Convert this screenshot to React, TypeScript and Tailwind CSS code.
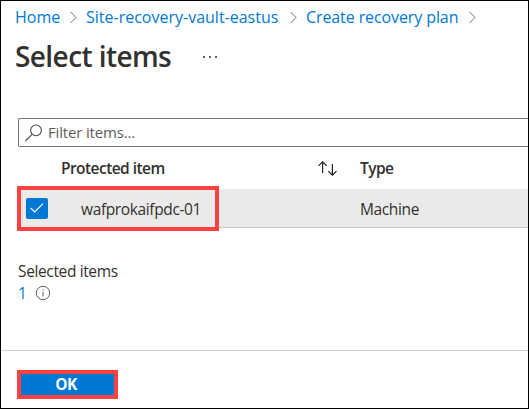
function Chevron() {
  return (
    <svg className="h-[13px] w-[7px] shrink-0" viewBox="0 0 7 13" fill="none" stroke="#6f6f6f" strokeWidth="1">
      <path d="M.6 1l5.4 5.5L.6 12" />
    </svg>
  );
}

function SearchIcon() {
  return (
    <svg className="ml-[6px] h-[18px] w-[18px] shrink-0" viewBox="0 0 18 18" fill="none" stroke="#4a4a4a" strokeWidth="1.1">
      <circle cx="11" cy="6.4" r="5.4" />
      <path d="M7.1 10.3L.4 17" />
    </svg>
  );
}

export default function App() {
  return (
    <main className="flex h-[409px] w-[529px] flex-col overflow-hidden border border-black bg-white font-['Open_Sans','Noto_Sans',sans-serif] text-[15.5px] tracking-[-0.37px] text-[#323130]">
      <nav className="flex h-8 shrink-0 items-center pl-[14px] text-base leading-8 tracking-normal whitespace-nowrap text-[#0078d4]">
        <a className="w-[55px]">Home</a>
        <Chevron />
        <a className="ml-[9px] w-[204px]">Site-recovery-vault-eastus</a>
        <Chevron />
        <a className="ml-[9px] w-[163px] tracking-[-0.1px]">Create recovery plan</a>
        <Chevron />
      </nav>

      <header className="flex h-[46px] shrink-0 items-center pl-[14px]">
        <h1 className="w-[188px] text-[28px] leading-[46px] font-semibold tracking-[-0.58px] whitespace-nowrap">Select items</h1>
        <div className="mt-[2px] flex gap-[4px]">
          <i className="size-[2px] bg-[#666]" />
          <i className="size-[2px] bg-[#666]" />
          <i className="size-[2px] bg-[#666]" />
        </div>
      </header>

      <div className="mt-[39px] ml-[17px] flex h-[29px] shrink-0 items-center rounded-l-[2px] border border-r-0 border-[#767676] text-[#605e5c]">
        <SearchIcon />
        <span className="ml-[5px] text-[15px] leading-[27px] tracking-[-0.16px]">Filter items...</span>
      </div>

      <div className="flex h-[42px] shrink-0 items-center pl-[60px] leading-[42px] font-semibold tracking-[-0.55px]">
        <span className="w-[257px]">Protected item</span>
        <svg className="h-[15px] w-[19px]" viewBox="0 0 19 15" fill="none" stroke="#252423" strokeWidth="1.2">
          <path d="M4.6 12V.8M.5 4.9L4.6.8l4.1 4.1M14.4 3v11.2M10.3 10.1l4.1 4.1 4.1-4.1" />
        </svg>
        <span className="ml-[23px]">Type</span>
      </div>

      <div className="ml-[17px] flex h-[39px] shrink-0 items-center border-b border-[#c8c6c4] bg-[#ebeae9]">
        <div className="-ml-px flex h-[45px] w-[202px] shrink-0 items-center border-4 border-[#ff4141] pl-[5px]">
          <span className="flex h-[21px] w-[22px] items-center justify-center rounded-[2px] bg-[#0078d4]">
            <svg className="h-[10px] w-[14px]" viewBox="0 0 14 10" fill="none" stroke="white" strokeWidth="1.1">
              <path d="M.7 5l4 4L13 .7" />
            </svg>
          </span>
          <span className="ml-[33px] pt-[2px] leading-[35px]">wafprokaifpdc-01</span>
        </div>
        <span className="ml-[141px] pt-[2px] leading-[36px]">Machine</span>
      </div>

      <section className="mt-[31px] h-[91px] shrink-0 pl-[17px]">
        <div className="h-[23px] leading-[25px]">Selected items</div>
        <div className="flex h-[21px] items-center">
          <a className="w-[17px] pt-[2px] leading-[19px] text-[#0078d4]">1</a>
          <svg className="h-[16px] w-[16px]" viewBox="0 0 16 16" fill="none" stroke="#605e5c">
            <circle cx="8" cy="8" r="6.7" />
            <path d="M8 7v4.5M8 4.5v1.2" />
          </svg>
        </div>
      </section>

      <footer className="flex grow items-start border-t border-[#d2d0ce] pt-[19px] pl-4">
        <button className="h-[29px] w-[101px] border-4 border-[#ff4141] bg-[#0078d4] pr-[3px] text-[15.5px] leading-[19px] font-bold tracking-[-0.6px] text-white">OK</button>
      </footer>
    </main>
  );
}
